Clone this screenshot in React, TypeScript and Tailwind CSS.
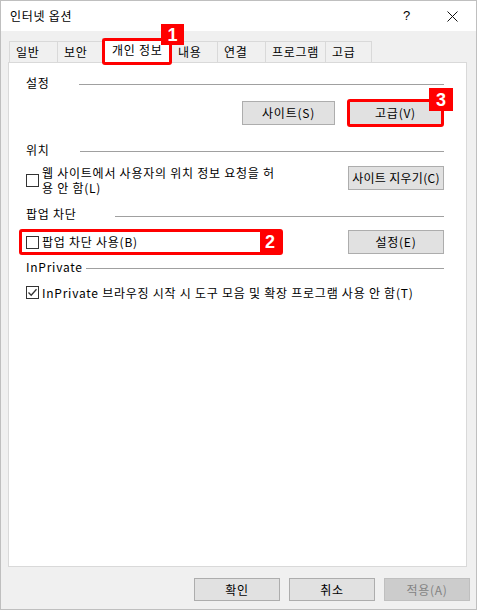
import type { ReactNode } from "react";

const tabs = [
  { label: "일반", w: "w-[49px]" },
  { label: "보안", w: "w-[46px]" },
  { label: "개인 정보", w: "w-[70px]", active: true },
  { label: "내용", w: "w-[47px]" },
  { label: "연결", w: "w-[49px]" },
  { label: "프로그램", w: "w-[61px]" },
  { label: "고급", w: "w-[47px]" },
];

function Badge({ n, className }: { n: string; className?: string }) {
  return (
    <div
      className={
        "absolute flex items-center justify-center bg-[#ff0000] font-['Liberation_Sans',Arial,sans-serif] text-[18px] font-bold leading-none tracking-normal text-white " +
        (className ?? "")
      }
    >
      {n}
    </div>
  );
}

function Button({
  children,
  className,
  disabled,
}: {
  children: ReactNode;
  className?: string;
  disabled?: boolean;
}) {
  return (
    <div
      className={
        "flex shrink-0 items-center justify-center border text-[12px] " +
        (disabled
          ? "border-[#bfbfbf] bg-[#cccccc] text-[#838383] "
          : "border-[#adadad] bg-[#e1e1e1] text-black ") +
        (className ?? "")
      }
    >
      {children}
    </div>
  );
}

function Checkbox({ checked }: { checked?: boolean }) {
  return (
    <div className="flex h-[13px] w-[13px] shrink-0 items-center justify-center border border-[#333333] bg-white">
      {checked && (
        <svg width="11" height="11" viewBox="0 0 11 11">
          <path d="M1.5 5.5 L4.2 8.3 L9.5 2.2" fill="none" stroke="#333" strokeWidth="1.3" />
        </svg>
      )}
    </div>
  );
}

function Section({ label, labelW, lineMt, className }: { label: string; labelW: string; lineMt: string; className: string }) {
  return (
    <div className={"flex items-start pl-[17px] pr-[22px] leading-[16px] " + className}>
      <span className={"shrink-0 " + labelW}>{label}</span>
      <div className={"h-px flex-1 bg-[#a0a0a0] " + lineMt} />
    </div>
  );
}

export default function App() {
  return (
    <div className="flex h-[610px] w-[477px] flex-col border border-[#bfbfbf] bg-[#f0f0f0] font-['Noto_Sans_CJK_KR','Liberation_Sans',sans-serif] text-[12px] tracking-[0.75px] text-black">
      {/* Title bar */}
      <div className="flex h-[30px] shrink-0 items-center bg-white pl-[9px] pr-[18px]">
        <span className="leading-none">인터넷 옵션</span>
        <span className="ml-auto mr-[36px] font-['Liberation_Sans',sans-serif] text-[13px]">?</span>
        <svg width="11" height="11" viewBox="0 0 11 11">
          <path d="M0.5 0.5 L10.5 10.5 M10.5 0.5 L0.5 10.5" stroke="#111" strokeWidth="1" />
        </svg>
      </div>

      {/* Tabs */}
      <div className="mt-[7px] flex h-[24px] items-end pl-[8px]">
        {tabs.map((t, i) =>
          t.active ? (
            <div
              key={t.label}
              className={"relative z-10 -mb-px -ml-px flex h-[25px] items-start border-x border-t border-[#d9d9d9] bg-white pl-[9px] pt-[2px] " + t.w}
            >
              {t.label}
              <div className="absolute -bottom-[2px] -left-px -right-px -top-px rounded-[3px] border-[3px] border-[#ff0000]" />
              <Badge n="1" className="-right-[13px] -top-[15px] h-[21px] w-[23px]" />
            </div>
          ) : (
            <div
              key={t.label}
              className={"flex h-[21px] items-center border-x border-t border-[#d9d9d9] pl-[6px] " + (i > 0 ? "-ml-px " : "") + t.w}
            >
              {t.label}
            </div>
          )
        )}
      </div>

      {/* Panel */}
      <div className="ml-[7px] h-[505px] w-[459px] border border-[#d9d9d9] bg-white">
        <Section label="설정" labelW="w-[53px]" lineMt="mt-[9px]" className="mt-[12px]" />

        <div className="mt-[10px] flex justify-end gap-[14px] pr-[24px]">
          <Button className="h-[24px] w-[93px]">사이트(S)</Button>
          <div className="relative">
            <Button className="h-[24px] w-[93px]">고급(V)</Button>
            <div className="absolute -inset-[2px] rounded-[3px] border-[3px] border-[#ff0000]" />
            <Badge n="3" className="-right-[11px] -top-[13px] h-[23px] w-[24px]" />
          </div>
        </div>

        <Section label="위치" labelW="w-[54px]" lineMt="mt-[9px]" className="mt-[17px]" />

        <div className="mt-[7px] flex items-start pl-[17px] pr-[22px]">
          <div className="flex items-center gap-[3px]">
            <Checkbox />
            <div className="leading-[15px]">
              웹 사이트에서 사용자의 위치 정보 요청을 허<br />용 안 함(L)
            </div>
          </div>
          <Button className="ml-auto mt-px h-[24px] w-[96px] tracking-[0.3px]">사이트 지우기(C)</Button>
        </div>

        <Section label="팝업 차단" labelW="w-[89px]" lineMt="mt-[10px]" className="mt-[11px]" />

        <div className="mt-[7px] flex items-start pl-[10px] pr-[22px]">
          <div className="flex h-[26px] w-[264px] items-center rounded-[3px] border-[3px] border-[#ff0000] pl-[4px]">
            <Checkbox />
            <span className="ml-[3px]">팝업 차단 사용(B)</span>
            <div className="ml-auto flex h-full w-[20px] items-center justify-center bg-[#ff0000] font-['Liberation_Sans',Arial,sans-serif] text-[18px] font-bold tracking-normal text-white">
              2
            </div>
          </div>
          <Button className="ml-auto mt-px h-[24px] w-[96px]">설정(E)</Button>
        </div>

        <Section label="InPrivate" labelW="w-[60px]" lineMt="mt-[9px]" className="mt-[4px]" />

        <div className="mt-[10px] flex items-center gap-[3px] pl-[17px] leading-[15px]">
          <Checkbox checked />
          <span>InPrivate 브라우징 시작 시 도구 모음 및 확장 프로그램 사용 안 함(T)</span>
        </div>
      </div>

      {/* Footer buttons */}
      <div className="mt-[11px] flex justify-end gap-[9px] pr-[6px]">
        <Button className="h-[23px] w-[86px]">확인</Button>
        <Button className="h-[23px] w-[86px]">취소</Button>
        <Button className="h-[23px] w-[86px]" disabled>
          적용(A)
        </Button>
      </div>
    </div>
  );
}
